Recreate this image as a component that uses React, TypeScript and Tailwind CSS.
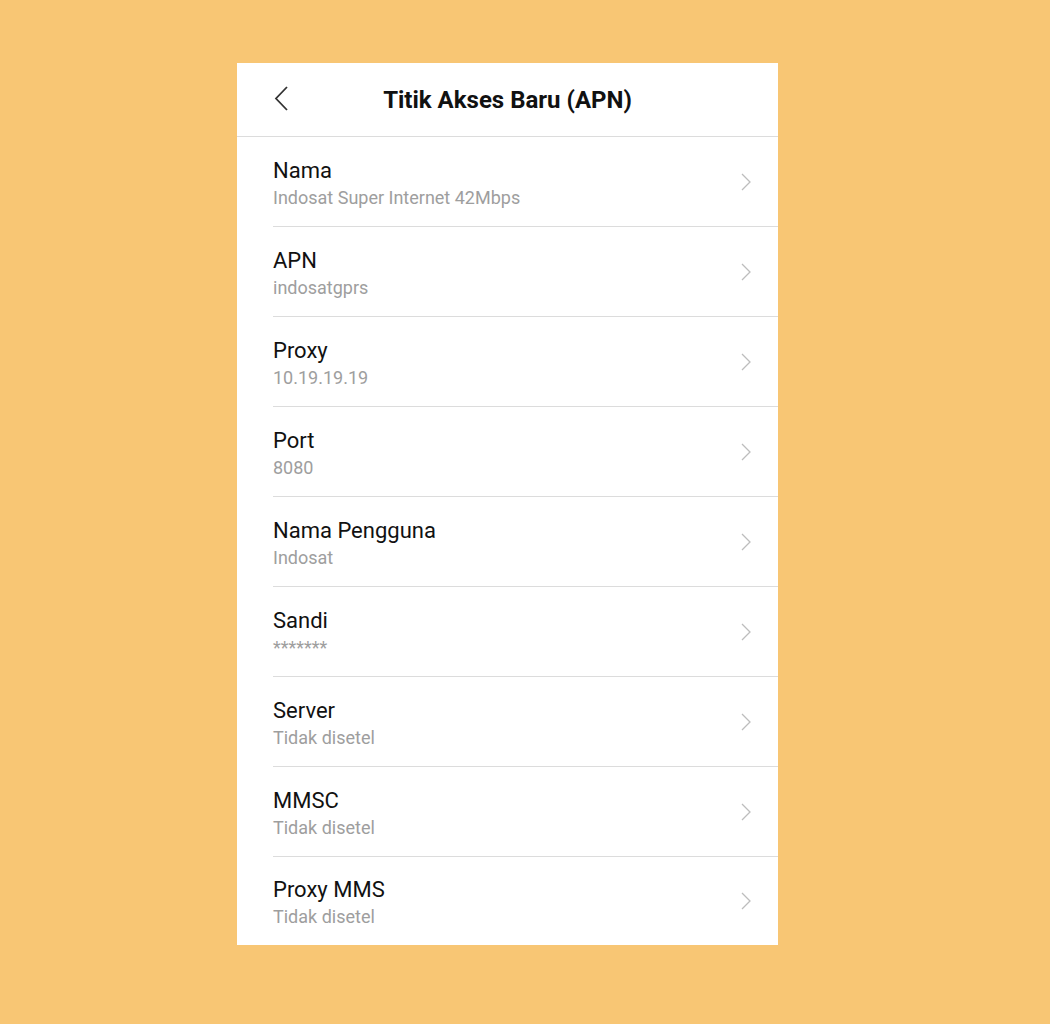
import React from "react";

const rows: [string, string][] = [
  ["Nama", "Indosat Super Internet 42Mbps"],
  ["APN", "indosatgprs"],
  ["Proxy", "10.19.19.19"],
  ["Port", "8080"],
  ["Nama Pengguna", "Indosat"],
  ["Sandi", "*******"],
  ["Server", "Tidak disetel"],
  ["MMSC", "Tidak disetel"],
  ["Proxy MMS", "Tidak disetel"],
];

function Chevron() {
  return (
    <svg width="12" height="18" viewBox="0 0 12 18" fill="none">
      <path d="M2 1 L10 9 L2 17" stroke="#bdbdbd" strokeWidth="1.3" />
    </svg>
  );
}

export default function App() {
  return (
    <div
      className="min-h-[1024px] w-full bg-[#f8c674] pt-[63px]"
      style={{ fontFamily: "Roboto, 'Noto Sans', sans-serif" }}
    >
      <div className="ml-[237px] w-[541px] bg-white">
        <div className="relative flex h-[74px] items-center justify-center border-b border-[#dcdcdc]">
          <svg
            className="absolute left-[36px] top-[23px]"
            width="16"
            height="25"
            viewBox="0 0 16 25"
            fill="none"
          >
            <path d="M14 1 L3 12.5 L14 24" stroke="#333333" strokeWidth="1.8" />
          </svg>
          <h1 className="text-[24px] font-bold text-[#111] leading-none">Titik Akses Baru (APN)</h1>
        </div>
        <div className="pl-9">
          {rows.map(([t, s], i) => {
            const last = i === rows.length - 1;
            return (
              <div
                key={t}
                className={
                  last
                    ? "flex h-[88px] items-center pr-[26px]"
                    : "flex h-[90px] items-center pr-[26px] border-b border-[#dcdcdc]"
                }
              >
                <div className="flex flex-1 flex-col pt-1">
                  <span className="text-[22px] leading-[26px] text-[#111]">{t}</span>
                  <span className="mt-[2px] text-[18px] leading-[24px] text-[#9e9e9e]">{s}</span>
                </div>
                <Chevron />
              </div>
            );
          })}
        </div>
      </div>
    </div>
  );
}
